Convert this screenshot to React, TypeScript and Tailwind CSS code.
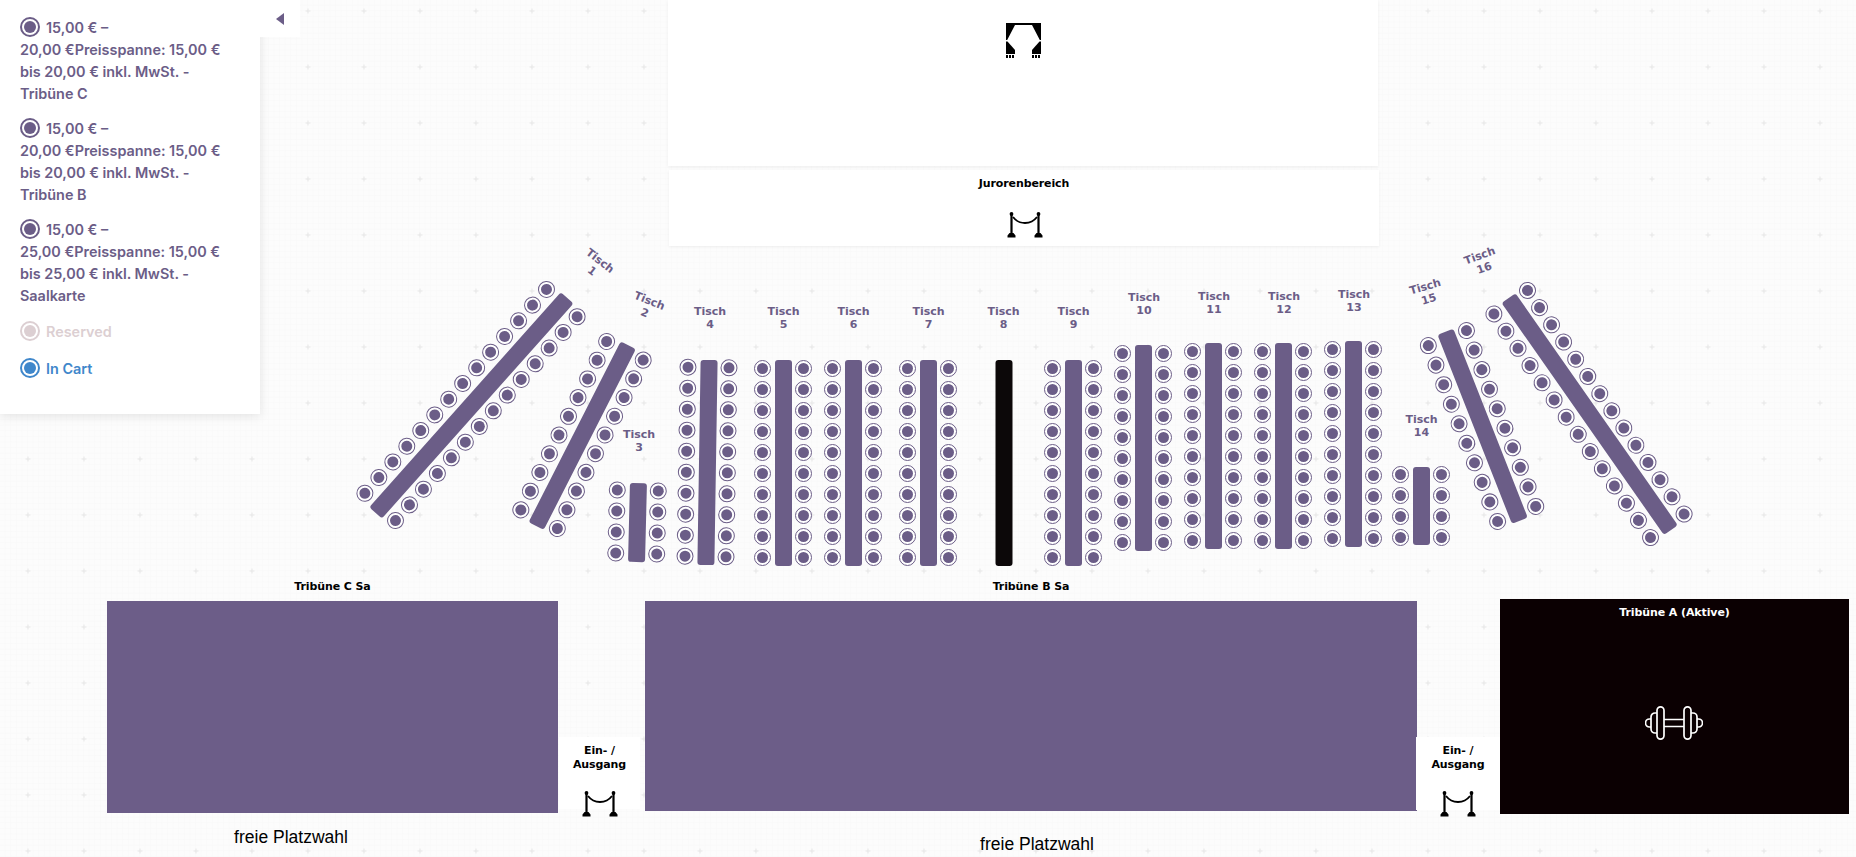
type TableDef = { x: number; y: number; len: number; seats: number; rot?: number; black?: boolean };
type LabelDef = { n: number; x: number; y: number; rot?: number };

const tables: TableDef[] = [
  { x: 471, y: 405, len: 288, seats: 14, rot: 41.7 },
  { x: 582, y: 435, len: 203, seats: 10, rot: 27 },
  { x: 637, y: 522, len: 79, seats: 4, rot: 1.4 },
  { x: 707, y: 462, len: 205, seats: 10, rot: 0.9 },
  { x: 783, y: 463, len: 206, seats: 10 },
  { x: 853, y: 463, len: 206, seats: 10 },
  { x: 928, y: 463, len: 206, seats: 10 },
  { x: 1003.5, y: 463, len: 206, seats: 0, black: true },
  { x: 1073, y: 463, len: 206, seats: 10 },
  { x: 1143, y: 448, len: 206, seats: 10 },
  { x: 1213, y: 446, len: 206, seats: 10 },
  { x: 1283, y: 446, len: 206, seats: 10 },
  { x: 1353, y: 444, len: 206, seats: 10 },
  { x: 1421, y: 506, len: 78, seats: 4 },
  { x: 1481.5, y: 426, len: 203, seats: 10, rot: -21.5 },
  { x: 1589, y: 414, len: 283, seats: 14, rot: -35 },
];

const labels: LabelDef[] = [
  { n: 1, x: 596, y: 266, rot: 38 },
  { n: 2, x: 647, y: 307, rot: 22 },
  { n: 3, x: 639, y: 441 },
  { n: 4, x: 710, y: 318 },
  { n: 5, x: 783.5, y: 318 },
  { n: 6, x: 853.5, y: 318 },
  { n: 7, x: 928.5, y: 318 },
  { n: 8, x: 1003.5, y: 318 },
  { n: 9, x: 1073.5, y: 318 },
  { n: 10, x: 1144, y: 304 },
  { n: 11, x: 1214, y: 303 },
  { n: 12, x: 1284, y: 303 },
  { n: 13, x: 1354, y: 301 },
  { n: 14, x: 1421.5, y: 426 },
  { n: 15, x: 1427, y: 293, rot: -16 },
  { n: 16, x: 1482, y: 262, rot: -20 },
];

const legend = [
  { range: '20,00', to: '20,00', name: 'Tribüne C' },
  { range: '20,00', to: '20,00', name: 'Tribüne B' },
  { range: '25,00', to: '25,00', name: 'Saalkarte' },
];

function Seat() {
  return (
    <div className="flex h-[17px] w-[17px] items-center justify-center rounded-full border-[1.5px] border-[#6b5d87] bg-white">
      <div className="h-[11px] w-[11px] rounded-full bg-[#6b5d87]" />
    </div>
  );
}

function SeatColumn({ count }: { count: number }) {
  return (
    <div className="flex flex-col gap-[4px]">
      {Array.from({ length: count }).map((_, i) => (
        <Seat key={i} />
      ))}
    </div>
  );
}

function Table({ t }: { t: TableDef }) {
  return (
    <div
      className="absolute flex -translate-x-1/2 -translate-y-1/2 items-center gap-[3.5px]"
      style={{ left: t.x, top: t.y, rotate: `${t.rot ?? 0}deg` }}
    >
      {t.seats > 0 && <SeatColumn count={t.seats} />}
      <div
        className={`w-[17px] rounded-[3px] ${t.black ? 'bg-[#0c0809]' : 'bg-[#6b5d87]'}`}
        style={{ height: t.len }}
      />
      {t.seats > 0 && <SeatColumn count={t.seats} />}
    </div>
  );
}

function TableLabel({ l }: { l: LabelDef }) {
  return (
    <div
      className="absolute -translate-x-1/2 -translate-y-1/2 text-center font-['DejaVu_Sans',sans-serif] text-[11px] leading-[13px] font-bold text-[#6b5d87]"
      style={{ left: l.x, top: l.y, rotate: `${l.rot ?? 0}deg` }}
    >
      Tisch
      <br />
      {l.n}
    </div>
  );
}

function Rope({ className }: { className: string }) {
  return (
    <svg viewBox="0 0 36 26" className={className} fill="none">
      <circle cx="4.5" cy="2" r="1.9" fill="#000" />
      <circle cx="31.5" cy="2" r="1.9" fill="#000" />
      <path d="M4.5 2V23M31.5 2V23" stroke="#000" strokeWidth="2.2" />
      <path d="M6 5C12 13 24 13 30 5" stroke="#000" strokeWidth="1.8" />
      <path d="M0.5 23.5 2.5 21H6.5L8.5 23.5V25.5H0.5ZM27.5 23.5 29.5 21H33.5L35.5 23.5V25.5H27.5Z" fill="#000" />
    </svg>
  );
}

function StageIcon() {
  return (
    <svg viewBox="0 0 35 35" className="h-[35px] w-[35px]" fill="#000">
      <polygon points="0,0 35,0 35,17 33.8,17 26,2 9,2 1.2,17 0,17" />
      <polygon points="0,18.5 1.5,18.5 9,27 9,31 0,31" />
      <polygon points="35,18.5 33.5,18.5 26,27 26,31 35,31" />
      <path d="M0 33.5H9M26 33.5H35" stroke="#000" strokeWidth="3" strokeDasharray="2 1" />
    </svg>
  );
}

function Dumbbell() {
  return (
    <svg viewBox="0 0 58 34" className="h-[34px] w-[58px]" fill="none" stroke="#fff" strokeWidth="1.7">
      <rect x="12" y="0.9" width="7" height="32.2" rx="3.5" />
      <rect x="39" y="0.9" width="7" height="32.2" rx="3.5" />
      <path d="M12 7H10A4 4 0 0 0 6 11V23A4 4 0 0 0 10 27H12" />
      <path d="M46 7H48A4 4 0 0 1 52 11V23A4 4 0 0 1 48 27H46" />
      <path d="M6 13H4.5A3.7 3.7 0 0 0 4.5 21H6" />
      <path d="M52 13H53.5A3.7 3.7 0 0 1 53.5 21H52" />
      <path d="M19 13.5H39M19 20.5H39" />
    </svg>
  );
}

function Radio({ color }: { color: string }) {
  return (
    <span
      className={`-my-[3px] mr-[6px] inline-flex h-[20px] w-[20px] items-center justify-center rounded-full border-2 bg-white align-baseline ${color}`}
    >
      <span className="h-[12px] w-[12px] rounded-full bg-current" />
    </span>
  );
}

function Legend() {
  return (
    <div className="absolute top-0 left-0 h-[414px] w-[260px] bg-white pt-[17px] pl-[20px] font-['Inter',sans-serif] text-[14.4px] leading-[22px] font-semibold whitespace-nowrap text-[#6b5d87] shadow-[0_2px_10px_rgba(0,0,0,0.1)]">
      <div className="flex flex-col gap-[13px]">
        {legend.map((item) => (
          <div key={item.name}>
            <Radio color="border-[#6b5d87] text-[#6b5d87]" />
            15,00 € –
            <br />
            {item.range} €Preisspanne: 15,00 €
            <br />
            bis {item.to} € inkl. MwSt. -
            <br />
            {item.name}
          </div>
        ))}
      </div>
      <div className="mt-[14px] text-[#dccfd2]">
        <Radio color="border-[#dccfd2] text-[#dccfd2]" />
        Reserved
      </div>
      <div className="mt-[15px] text-[#3f87cb]">
        <Radio color="border-[#3f87cb] text-[#3f87cb]" />
        In Cart
      </div>
      <div className="absolute top-0 left-[260px] flex h-[37px] w-[40px] items-center justify-center bg-white">
        <svg viewBox="0 0 8 12" className="h-[12px] w-[8px]" fill="#6b5d87">
          <polygon points="8,0 8,12 0,6" />
        </svg>
      </div>
    </div>
  );
}

const blockLabel = "font-['DejaVu_Sans',sans-serif] text-[11px] leading-[14px] font-bold text-center tracking-[-0.1px]";

export default function App() {
  return (
    <div className="relative h-[857px] w-full overflow-hidden bg-[#fcfcfc]">
      <svg className="absolute inset-0 h-full w-full" aria-hidden="true">
        <defs>
          <pattern id="fine" width="5.6" height="5.6" patternUnits="userSpaceOnUse">
            <path d="M5.6 0V5.6H0" fill="none" stroke="#f7f7f7" strokeWidth="1" />
          </pattern>
          <pattern id="plus" width="56" height="56" x="0" y="0" patternUnits="userSpaceOnUse">
            <path d="M25.5 11H30.5M28 8.5V13.5" stroke="#e6e6e6" strokeWidth="1" />
          </pattern>
        </defs>
        <rect width="100%" height="100%" fill="url(#fine)" />
        <rect width="100%" height="100%" fill="url(#plus)" />
      </svg>

      {/* stage + jury */}
      <div className="absolute top-0 left-[668px] flex h-[166px] w-[710px] justify-center bg-white pt-[23px] pl-[1px] shadow-[0_1px_3px_rgba(0,0,0,0.06)]">
        <StageIcon />
      </div>
      <div className="absolute top-[170px] left-[669px] flex h-[76px] w-[710px] flex-col items-center bg-white pt-[7px] shadow-[0_1px_3px_rgba(0,0,0,0.06)]">
        <div className={`${blockLabel} text-black`}>Jurorenbereich</div>
        <Rope className="mt-[21px] ml-[1px] h-[26px] w-[36px] shrink-0" />
      </div>

      {tables.map((t, i) => (
        <Table key={i} t={t} />
      ))}
      {labels.map((l) => (
        <TableLabel key={l.n} l={l} />
      ))}

      {/* tribunes */}
      <div className={`${blockLabel} absolute top-[580px] left-[107px] w-[451px] text-black`}>Tribüne C Sa</div>
      <div className="absolute top-[601px] left-[107px] h-[212px] w-[451px] bg-[#6c5d88]" />
      <div className={`${blockLabel} absolute top-[580px] left-[645px] w-[772px] text-black`}>Tribüne B Sa</div>
      <div className="absolute top-[601px] left-[645px] h-[210px] w-[772px] bg-[#6c5d88]" />

      <div className="absolute top-[599px] left-[1500px] flex h-[215px] w-[349px] flex-col items-center bg-[#0b0002] pt-[7px]">
        <div className={`${blockLabel} text-white`}>Tribüne A (Aktive)</div>
        <div className="mt-[86px] -ml-[2px]">
          <Dumbbell />
        </div>
      </div>

      <div className="absolute top-[737px] left-[559px] flex h-[72px] w-[81px] flex-col items-center bg-white pt-[7px]">
        <div className={`${blockLabel} text-black`}>
          Ein- /
          <br />
          Ausgang
        </div>
        <Rope className="mt-[19px] h-[26px] w-[36px] shrink-0" />
      </div>
      <div className="absolute top-[737px] left-[1416px] flex h-[73px] w-[84px] flex-col items-center bg-white pt-[7px]">
        <div className={`${blockLabel} text-black`}>
          Ein- /
          <br />
          Ausgang
        </div>
        <Rope className="mt-[19px] h-[26px] w-[36px] shrink-0" />
      </div>

      <div className="absolute top-[827px] left-[107px] w-[368px] text-center font-['Liberation_Sans',sans-serif] text-[17.5px] leading-[20px] text-black">
        freie Platzwahl
      </div>
      <div className="absolute top-[834px] left-[845px] w-[384px] text-center font-['Liberation_Sans',sans-serif] text-[17.5px] leading-[20px] text-black">
        freie Platzwahl
      </div>

      <Legend />
    </div>
  );
}
